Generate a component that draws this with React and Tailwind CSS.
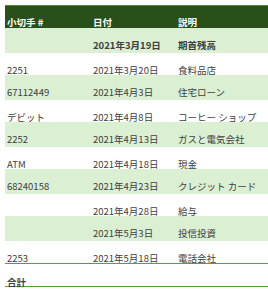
import React from 'react';

const rows = [
  { no: '', date: '2021年3月19日', desc: '期首残高', bold: true },
  { no: '2251', date: '2021年3月20日', desc: '食料品店' },
  { no: '67112449', date: '2021年4月3日', desc: '住宅ローン' },
  { no: 'デビット', date: '2021年4月8日', desc: 'コーヒー ショップ' },
  { no: '2252', date: '2021年4月13日', desc: 'ガスと電気会社' },
  { no: 'ATM', date: '2021年4月18日', desc: '現金' },
  { no: '68240158', date: '2021年4月23日', desc: 'クレジット カード' },
  { no: '', date: '2021年4月28日', desc: '給与' },
  { no: '', date: '2021年5月3日', desc: '投信投資' },
  { no: '2253', date: '2021年5月18日', desc: '電話会社' },
];

const cell = 'pl-[2px] pt-[10px] leading-[14px] whitespace-nowrap';

export default function App() {
  return (
    <div
      className="w-[268px] h-[293px] bg-white pt-[5px] pl-[5px] text-[9.5px] text-[#404040] overflow-hidden"
      style={{ fontFamily: '"Noto Sans CJK JP", "Noto Sans", sans-serif' }}
    >
      {/* 見出し */}
      <div className="grid grid-cols-[86px_85px_1fr] h-[23px] border-t border-[#4f8a32] bg-[#29501a] text-white font-bold">
        <div className={cell.replace('pt-[10px]', 'pt-[9px]')}>小切手 #</div>
        <div className={cell.replace('pt-[10px]', 'pt-[9px]')}>日付</div>
        <div className={cell.replace('pt-[10px]', 'pt-[9px]')}>説明</div>
      </div>

      {rows.map((r, i) => (
        <div
          key={i}
          className={
            'grid grid-cols-[86px_85px_1fr] ' +
            (i % 2 === 0 ? 'h-[25px] bg-[#dbefd3]' : 'h-[22px] bg-white') +
            (r.bold ? ' font-bold' : '')
          }
        >
          <div className={cell}>{r.no}</div>
          <div className={cell}>{r.date}</div>
          <div className={cell}>{r.desc}</div>
        </div>
      ))}

      {/* 合計 */}
      <div className="grid grid-cols-[86px_85px_1fr] h-[24px] border-y border-[#58a03a] font-bold">
        <div className={cell.replace('pt-[10px]', 'pt-[11px]')}>合計</div>
        <div />
        <div />
      </div>
    </div>
  );
}
